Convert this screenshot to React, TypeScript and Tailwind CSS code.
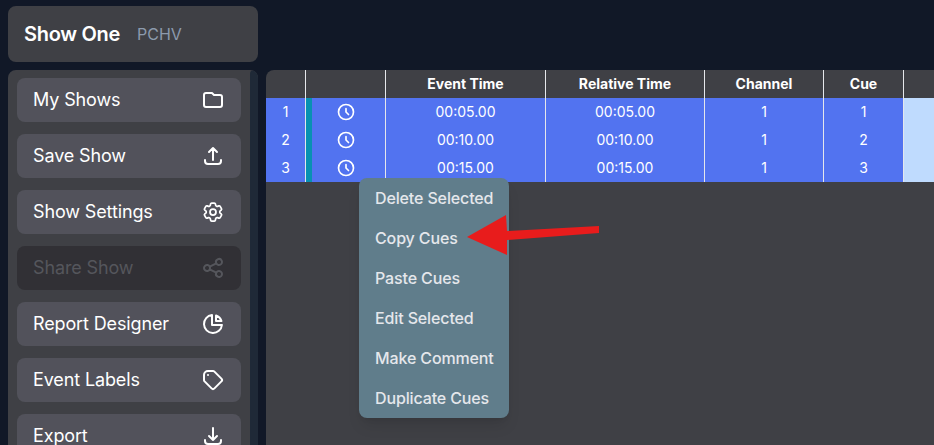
import React from "react";
import {
  HiOutlineChartPie,
  HiOutlineClock,
  HiOutlineDownload,
  HiOutlineFolder,
  HiOutlineShare,
  HiOutlineTag,
  HiOutlineUpload,
} from "react-icons/hi";
import { HiOutlineCog6Tooth } from "react-icons/hi2";

const navItems = [
  { label: "My Shows", icon: HiOutlineFolder, stroke: 2 },
  { label: "Save Show", icon: HiOutlineUpload, stroke: 2 },
  { label: "Show Settings", icon: HiOutlineCog6Tooth, stroke: 1.75 },
  { label: "Share Show", icon: HiOutlineShare, stroke: 2, disabled: true },
  { label: "Report Designer", icon: HiOutlineChartPie, stroke: 2 },
  { label: "Event Labels", icon: HiOutlineTag, stroke: 2 },
  { label: "Export", icon: HiOutlineDownload, stroke: 2 },
];

const rows = [
  { id: 1, time: "00:05.00", cue: 1 },
  { id: 2, time: "00:10.00", cue: 2 },
  { id: 3, time: "00:15.00", cue: 3 },
];

const menuItems = [
  "Delete Selected",
  "Copy Cues",
  "Paste Cues",
  "Edit Selected",
  "Make Comment",
  "Duplicate Cues",
];

const gridCols = "grid grid-cols-[40px_80px_160px_159px_119px_80px_1fr]";

export default function App() {
  return (
    <div className="relative h-[445px] w-[934px] overflow-hidden bg-[#111827] font-['Inter',sans-serif] flex gap-2 pl-2">
      {/* left column */}
      <div className="w-[250px] shrink-0 flex flex-col gap-2 pt-1.5">
        <div className="h-14 shrink-0 rounded-lg bg-[#3f4045] flex items-center pl-4 gap-[17px]">
          <span className="text-xl font-semibold text-white leading-none tracking-[-0.3px]">Show One</span>
          <span className="text-base text-[#8c9aad] leading-none">PCHV</span>
        </div>
        <div className="flex-1 min-h-0 rounded-t-lg bg-[#3f4045] flex overflow-hidden">
          <div className="flex-1 flex flex-col gap-3 pt-2 pl-[9px] pr-[9px]">
            {navItems.map((item) => (
              <div
                key={item.label}
                className={`h-11 shrink-0 rounded-lg flex items-center justify-between pl-4 pr-4 ${
                  item.disabled ? "bg-[#313035] text-[#55565c]" : "bg-[#52525b] text-white"
                }`}
              >
                <span className="text-lg leading-none tracking-[-0.13px]">{item.label}</span>
                <item.icon className="w-6 h-6" strokeWidth={item.stroke} />
              </div>
            ))}
          </div>
          <div className="w-2 shrink-0 rounded-t bg-[#1f2937]" />
        </div>
      </div>

      {/* cue table */}
      <div className="flex-1 mt-[70px] rounded-tl-lg bg-[#3f4045] overflow-hidden">
        <div className={`${gridCols} h-7 text-sm font-bold text-white`}>
          <div className="border-r border-[#e5e7eb]" />
          <div className="border-r border-[#e5e7eb]" />
          <div className="border-r border-[#e5e7eb] flex items-center justify-center">Event Time</div>
          <div className="border-r border-[#e5e7eb] flex items-center justify-center">Relative Time</div>
          <div className="border-r border-[#e5e7eb] flex items-center justify-center">Channel</div>
          <div className="border-r border-[#e5e7eb] flex items-center justify-center">Cue</div>
          <div />
        </div>
        {rows.map((row) => (
          <div key={row.id} className={`${gridCols} h-7 text-sm text-white`}>
            <div className="bg-[#5273f0] border-r border-[#e5e7eb] flex items-center justify-center">{row.id}</div>
            <div className="bg-[#5273f0] border-r border-[#e5e7eb] flex items-center">
              <div className="w-1.5 h-full bg-[#0891b2]" />
              <div className="flex-1 flex justify-center pr-1.5">
                <HiOutlineClock className="w-5 h-5" />
              </div>
            </div>
            <div className="bg-[#5273f0] border-r border-[#e5e7eb] flex items-center justify-center">{row.time}</div>
            <div className="bg-[#5273f0] border-r border-[#e5e7eb] flex items-center justify-center">{row.time}</div>
            <div className="bg-[#5273f0] border-r border-[#e5e7eb] flex items-center justify-center">1</div>
            <div className="bg-[#5273f0] border-r border-[#e5e7eb] flex items-center justify-center">{row.cue}</div>
            <div className="bg-[#bfdbfe]" />
          </div>
        ))}
      </div>

      {/* context menu */}
      <div className="absolute left-[359px] top-[178px] w-[150px] rounded-lg bg-[#607d8b] shadow-lg">
        {menuItems.map((item) => (
          <div key={item} className="h-10 flex items-center pl-4 text-base font-medium tracking-[-0.13px] text-[#e5e7eb] whitespace-nowrap">
            {item}
          </div>
        ))}
      </div>

      {/* annotation arrow */}
      <svg className="absolute left-[460px] top-[210px]" width="145" height="50" viewBox="0 0 145 50">
        <polygon points="7,27 46,5 47,21 139,16 139,23 47,30 47,45" fill="#e81c1c" />
      </svg>
    </div>
  );
}
